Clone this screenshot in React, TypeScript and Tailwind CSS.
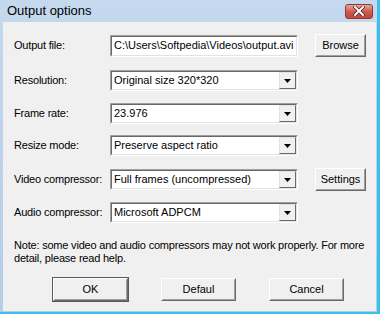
const font = { fontFamily: '"Liberation Sans", Arial, sans-serif' };

const Sunken = ({ children, className = '' }: { children: React.ReactNode; className?: string }) => (
  <div className={`border border-t-[#a0a0a0] border-l-[#a0a0a0] border-b-white border-r-white ${className}`}>
    <div className="h-full border border-t-[#696969] border-l-[#696969] border-b-[#e3e3e3] border-r-[#e3e3e3] bg-white">
      {children}
    </div>
  </div>
);

const WinButton = ({ label, className = '' }: { label: string; className?: string }) => (
  <div className={`border border-t-white border-l-white border-b-[#696969] border-r-[#696969] bg-[#f0f0f0] ${className}`}>
    <div className="h-full flex items-center justify-center border border-t-[#f0f0f0] border-l-[#f0f0f0] border-b-[#a0a0a0] border-r-[#a0a0a0] text-[11px] text-black">
      {label}
    </div>
  </div>
);

const Combo = ({ value }: { value: string }) => (
  <Sunken className="w-[188px] h-[21px]">
    <div className="flex h-full items-center">
      <span className="flex-1 pl-[2px] text-[11px] text-black truncate">{value}</span>
      <div className="w-[17px] h-[17px] border border-t-[#e3e3e3] border-l-[#e3e3e3] border-b-[#696969] border-r-[#696969] bg-[#f0f0f0] flex items-center justify-center">
        <svg width="7" height="4" viewBox="0 0 7 4">
          <path d="M0 0h7L3.5 4z" fill="#000" />
        </svg>
      </div>
    </div>
  </Sunken>
);

const Row = ({ label, mt, children }: { label: string; mt: string; children: React.ReactNode }) => (
  <div className={`flex items-center h-[21px] ${mt}`}>
    <div className="w-[96px] shrink-0 whitespace-nowrap text-[11px] tracking-[-0.2px] text-black">{label}</div>
    {children}
  </div>
);

export default function App() {
  return (
    <div className="w-[380px] h-[315px] bg-white overflow-hidden" style={font}>
      <div className="w-[380px] h-[314px] flex flex-col bg-gradient-to-b from-[#c4d8ee] to-[#b5cde6] border-r-[3px] border-b-[2px] border-r-[#3cc0ea] border-b-[#3cc0ea]">
        {/* title bar */}
        <div className="h-[22px] flex items-center justify-between pl-[7px] pr-[4px]">
          <span className="text-[13px] text-black">Output options</span>
          <div className="w-[28px] h-[15px] rounded-[3px] border border-[#8a3a3a] bg-gradient-to-b from-[#e5a79c] via-[#cf5b4d] to-[#c2453a] flex items-center justify-center">
            <svg width="12" height="10" viewBox="0 0 12 10">
              <path d="M2 1l8 8M10 1L2 9" stroke="#4a1d18" strokeWidth="3.4" strokeLinecap="square" />
              <path d="M2 1l8 8M10 1L2 9" stroke="#fff" strokeWidth="2" strokeLinecap="square" />
            </svg>
          </div>
        </div>
        {/* body */}
        <div className="flex-1 ml-[3px] mr-[1px] mb-[1px] bg-[#f0f0f0] pl-[11px] flex flex-col">
          <Row label="Output file:" mt="mt-[13px]">
            <Sunken className="w-[188px] h-[22px]">
              <div className="flex h-full items-center pl-[2px] text-[11px] text-black whitespace-nowrap overflow-hidden">
                C:\Users\Softpedia\Videos\output.avi
              </div>
            </Sunken>
            <WinButton label="Browse" className="ml-[17px] w-[51px] h-[23px]" />
          </Row>
          <Row label="Resolution:" mt="mt-[14px]">
            <Combo value="Original size 320*320" />
          </Row>
          <Row label="Frame rate:" mt="mt-[12px]">
            <Combo value="23.976" />
          </Row>
          <Row label="Resize mode:" mt="mt-[11px]">
            <Combo value="Preserve aspect ratio" />
          </Row>
          <Row label="Video compressor:" mt="mt-[13px]">
            <Combo value="Full frames (uncompressed)" />
            <WinButton label="Settings" className="ml-[17px] w-[51px] h-[23px]" />
          </Row>
          <Row label="Audio compressor:" mt="mt-[12px]">
            <Combo value="Microsoft ADPCM" />
          </Row>
          <p className="mt-[16px] text-[11px] leading-[13px] tracking-[-0.2px] text-black">
            Note: some video and audio compressors may not work properly. For more
            <br />
            detail, please read help.
          </p>
          <div className="mt-[13px] flex pl-[39px] gap-[33px]">
            <WinButton label="OK" className="w-[75px] h-[23px] outline outline-1 outline-[#5a5a5a]" />
            <WinButton label="Defaul" className="w-[75px] h-[23px]" />
            <WinButton label="Cancel" className="w-[75px] h-[23px]" />
          </div>
        </div>
      </div>
    </div>
  );
}
